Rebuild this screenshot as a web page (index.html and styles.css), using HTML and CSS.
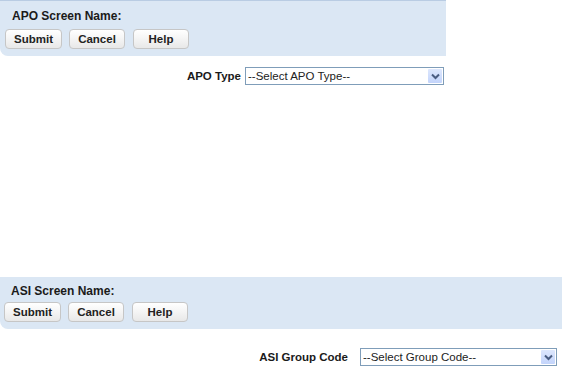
FILE: index.html
```html
<!DOCTYPE html>
<html lang="en">

<head>
    <meta charset="UTF-8">
    <title>Screen Names</title>
    <link rel="stylesheet" href="styles.css">
</head>

<body>
    <div class="panel panel-apo">
        <div class="panel-title">APO Screen Name:</div>
        <div class="buttons">
            <button class="btn btn-submit">Submit</button>
            <button class="btn btn-cancel">Cancel</button>
            <button class="btn btn-help">Help</button>
        </div>
    </div>

    <div class="field-row row-apo">
        <label for="apoType">APO Type</label>
        <div class="dropdown dropdown-apo">
            <select id="apoType" name="apoType">
                <option value="">--Select APO Type--</option>
            </select>
            <span class="arrow">
                <svg width="9" height="7" viewBox="0 0 9 7"><path d="M1 1.5 L4.5 5 L8 1.5" fill="none" stroke="#4a5d82" stroke-width="2"/></svg>
            </span>
        </div>
    </div>

    <div class="panel panel-asi">
        <div class="panel-title">ASI Screen Name:</div>
        <div class="buttons">
            <button class="btn btn-submit">Submit</button>
            <button class="btn btn-cancel">Cancel</button>
            <button class="btn btn-help">Help</button>
        </div>
    </div>

    <div class="field-row row-asi">
        <label for="asiGroup">ASI Group Code</label>
        <div class="dropdown dropdown-asi">
            <select id="asiGroup" name="asiGroup">
                <option value="">--Select Group Code--</option>
            </select>
            <span class="arrow">
                <svg width="9" height="7" viewBox="0 0 9 7"><path d="M1 1.5 L4.5 5 L8 1.5" fill="none" stroke="#4a5d82" stroke-width="2"/></svg>
            </span>
        </div>
    </div>
</body>

</html>
```

FILE: styles.css
```css
html,
body {
    padding: 0;
    margin: 0;
    background: #fff;
    font-family: "Liberation Sans", Arial, sans-serif;
    font-size: 11px;
    color: #1a1a1a;
}

.panel {
    background: #dbe7f4;
    border-top: 1px solid #b9cce3;
    border-bottom-left-radius: 8px;
    padding: 8px 0 7px 5px;
}

.panel-apo {
    width: 441px;
}

.panel-asi {
    margin-top: 192px;
    border-top-color: #dbe7f4;
    padding-top: 6px;
    padding-left: 4px;
}

.panel-title {
    font-weight: bold;
    font-size: 12px;
    height: 14px;
    line-height: 14px;
    margin-left: 7px;
}

.buttons {
    display: flex;
    gap: 7px;
    margin-top: 6px;
}

.panel-asi .buttons {
    margin-top: 4px;
}

.btn {
    height: 20px;
    width: 57px;
    padding: 0;
    font-family: "Liberation Sans", Arial, sans-serif;
    font-size: 11.5px;
    font-weight: bold;
    color: #222;
    border: 1px solid #c6c6c6;
    border-radius: 4px;
    background: linear-gradient(#ffffff, #f4f4f4 50%, #e8e8e8);
}

.btn-cancel {
    width: 56px;
}

.btn-help {
    width: 56px;
    margin-left: 1px;
}

.field-row {
    display: flex;
    justify-content: flex-end;
    align-items: center;
}

.field-row label {
    font-weight: bold;
    font-size: 11.5px;
}

.row-apo {
    width: 444px;
    margin-top: 11px;
}

.row-apo label {
    margin-right: 4px;
}

.row-asi {
    width: 557px;
    margin-top: 19px;
}

.row-asi label {
    margin-right: 12px;
}

.dropdown {
    position: relative;
    height: 18px;
}

.dropdown-apo {
    width: 199px;
}

.dropdown-asi {
    width: 197px;
}

.dropdown select {
    appearance: none;
    -webkit-appearance: none;
    width: 100%;
    height: 18px;
    margin: 0;
    padding: 0 0 0 2px;
    border: 1px solid #7f9db9;
    border-radius: 0;
    background: #fff;
    font-family: "Liberation Sans", Arial, sans-serif;
    font-size: 11.5px;
    color: #222;
}

.arrow {
    position: absolute;
    top: 2px;
    right: 2px;
    width: 14px;
    height: 14px;
    display: flex;
    align-items: center;
    justify-content: center;
    background: linear-gradient(#dde7fd, #c3d4fb);
    border-radius: 1px;
    pointer-events: none;
}
```
